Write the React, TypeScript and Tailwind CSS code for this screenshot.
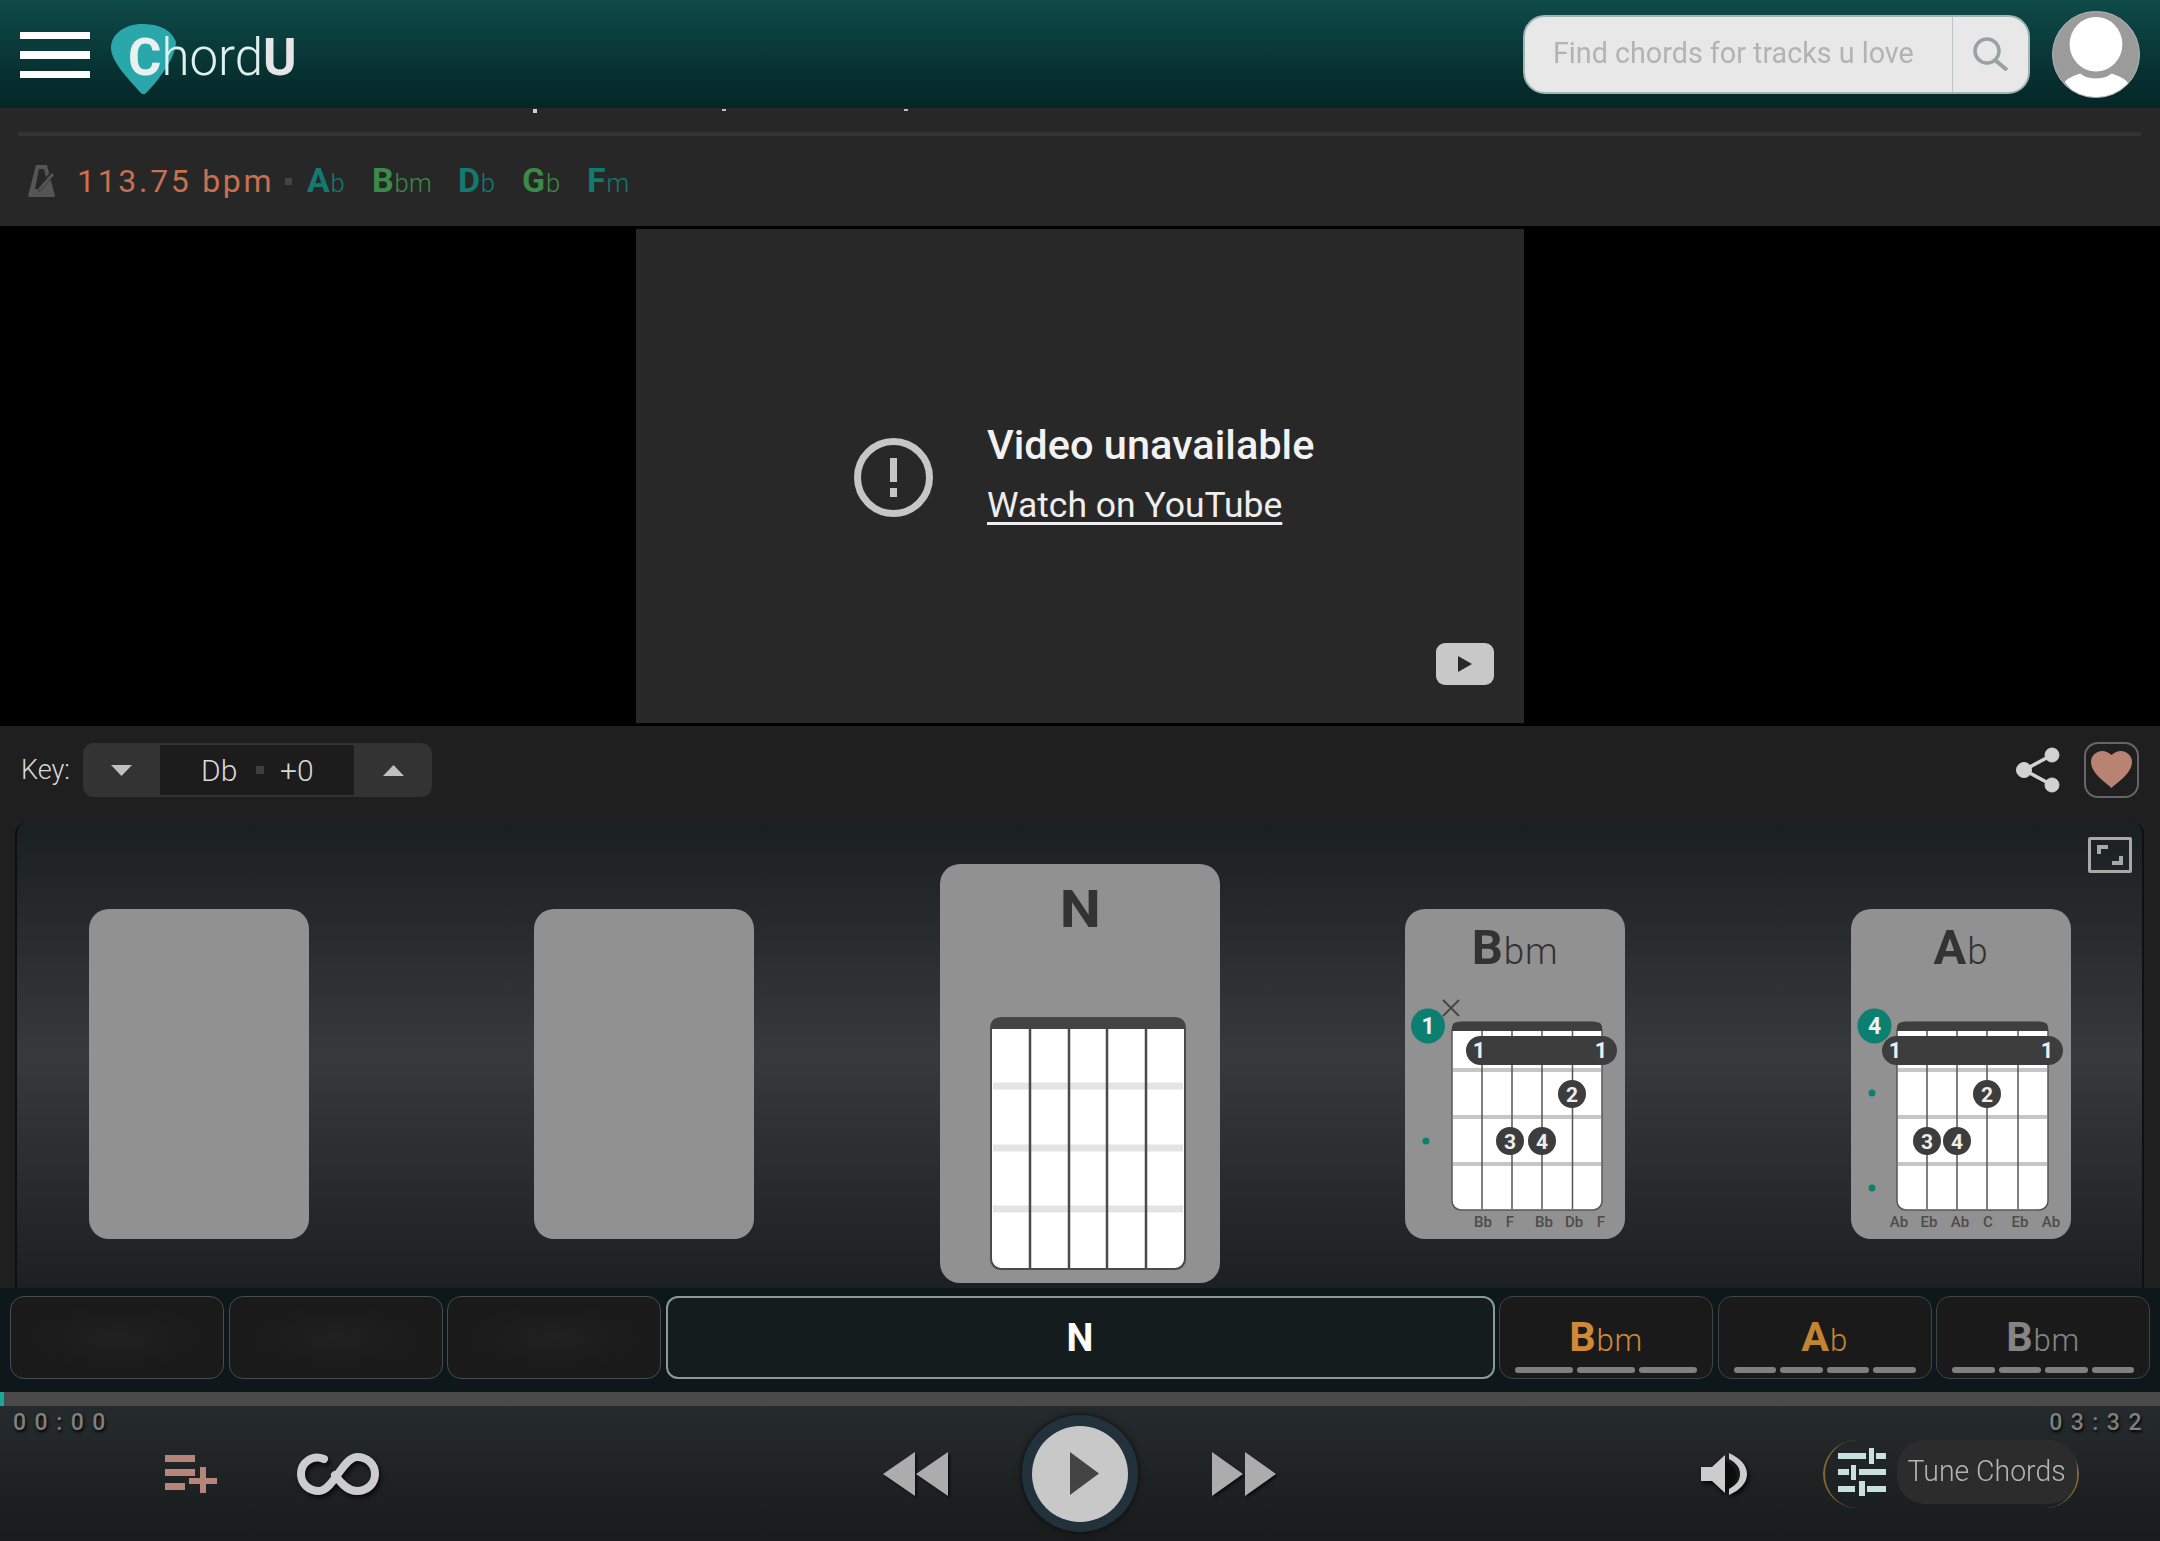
import React from "react";

const Root = ({ r, s, c }: { r: string; s: string; c?: string }) => (
  <span className={"whitespace-nowrap " + (c || "")}>
    <span className="font-bold text-[1.06em]">{r}</span>
    <span className="font-light text-[0.8em] ml-[0.03em] tracking-[0.02em]">{s}</span>
  </span>
);

const Hamburger = () => (
  <div className="ml-[20px] w-[70px] flex flex-col gap-[12px] mt-[2px]">
    <div className="h-[7px] bg-white" />
    <div className="h-[8px] bg-white" />
    <div className="h-[7px] bg-white" />
  </div>
);

const Logo = () => (
  <div className="ml-[21px] flex items-center h-[70px] mt-[10px]">
    <svg width="65" height="70" viewBox="0 0 65 70" className="shrink-0">
      <path d="M31 0C45 0 60 4 65 18C65 34 45 60 34 70H31C20 58 0 38 0 24C0 10 14 0 31 0Z" fill="#2aa7aa" />
    </svg>
    <div className="-ml-[48px] text-[51px] leading-none text-[#dff0f0] font-light whitespace-nowrap mt-[-4px]">
      <span className="font-bold text-[#e8f0f0]">C</span>hord<span className="font-bold text-[#e6e6e6]">U</span>
    </div>
  </div>
);

const SearchBox = () => (
  <div className="ml-auto w-[507px] h-[79px] rounded-[22px] bg-[#e8e8e8] border-[2px] border-[#a3b5b3] flex overflow-hidden">
    <div className="w-[427px] pl-[28px] flex items-center text-[29px] text-[#b3b3b3] whitespace-nowrap">
      <span className="origin-left scale-x-[0.99] inline-block">Find chords for tracks u love</span>
    </div>
    <div className="flex-1 border-l border-[#bcc8c6] flex items-center justify-center">
      <svg width="35" height="34" viewBox="0 0 35 34" fill="none" stroke="#98a2a2">
        <circle cx="14" cy="14" r="12" strokeWidth="3.5" />
        <path d="M22 23L34 33" strokeWidth="4" />
      </svg>
    </div>
  </div>
);

const Avatar = () => (
  <div className="ml-[22px] mr-[20px] w-[88px] h-[87px] rounded-full overflow-hidden bg-[#9b9b9b] border border-[#b5b5b5] shrink-0">
    <svg width="86" height="85" viewBox="0 0 88 87">
      <ellipse cx="44" cy="33" rx="27" ry="28" fill="#fff" />
      <path d="M12 72C14 68 22 65 28 63C33 67 38 68 44 68C50 68 55 67 60 63C66 65 74 68 78 74L60 90H28Z" fill="#fff" />
    </svg>
  </div>
);

const Metronome = () => (
  <svg width="28" height="34" viewBox="0 0 28 34" className="ml-[28px] shrink-0">
    <path d="M8 1H19L27 32Q27 33 25 33H2Q0 33 0 32Z" fill="#555" />
    <path d="M11 5H16L19 18L14 25H7Z" fill="#272727" />
    <path d="M10 26L26 8" stroke="#272727" strokeWidth="5" />
    <path d="M11 26L25 10" stroke="#555" strokeWidth="3" />
  </svg>
);

const ChordChip = ({ r, s, w, c }: { r: string; s: string; w: string; c: string }) => (
  <div className={w + " shrink-0 " + c}>
    <div className="inline-block text-[32px] leading-none">
      <Root r={r} s={s} />
    </div>
  </div>
);

const SubBar = () => (
  <div className="h-[118px] bg-[#272727] shrink-0">
    <div className="flex h-[5px] pt-[1px]">
      <div className="ml-[533px] w-[4px] h-[4px] bg-[#cfcfcf]" />
      <div className="ml-[185px] w-[4px] h-[2px] bg-[#bbb]" />
      <div className="ml-[178px] w-[4px] h-[2px] bg-[#bbb]" />
    </div>
    <div className="mt-[19px] ml-[18px] mr-[19px] h-[4px] bg-[#333333]" />
    <div className="h-[90px] flex items-center">
      <Metronome />
      <div className="ml-[21px] w-[208px] shrink-0 text-[32px] leading-none text-[#c96f52] tracking-[2.7px] whitespace-nowrap">113.75 bpm</div>
      <div className="w-[7px] h-[7px] bg-[#444] shrink-0" />
      <div className="ml-[15px] flex items-center">
        <ChordChip r="A" s="b" w="w-[65px]" c="text-[#127a70]" />
        <ChordChip r="B" s="bm" w="w-[86px]" c="text-[#3b8a47]" />
        <ChordChip r="D" s="b" w="w-[64px]" c="text-[#127a70]" />
        <ChordChip r="G" s="b" w="w-[65px]" c="text-[#3b8a47]" />
        <ChordChip r="F" s="m" w="w-[65px]" c="text-[#127a70]" />
      </div>
    </div>
  </div>
);

const Video = () => (
  <div className="h-[500px] bg-black flex justify-center shrink-0">
    <div className="relative mt-[3px] w-[888px] h-[494px] bg-[#282828] pl-[218px] pt-[191px] flex items-start">
      <svg width="79" height="79" viewBox="0 0 79 79" className="mt-[18px] shrink-0">
        <circle cx="39.5" cy="39.5" r="36" fill="none" stroke="#c6c6c6" strokeWidth="7" />
        <rect x="36" y="20" width="7" height="24" fill="#c6c6c6" />
        <rect x="36" y="50" width="7" height="9" fill="#c6c6c6" />
      </svg>
      <div className="ml-[54px] text-white whitespace-nowrap">
        <div className="h-[50px] flex items-center text-[41.5px] font-medium text-[#f2f2f2]">Video unavailable</div>
        <div className="mt-[14px] h-[44px] flex items-center text-[35.5px] text-[#eeeeee] underline underline-offset-[5px] decoration-[3px]">Watch on YouTube</div>
      </div>
      <div className="absolute right-[30px] bottom-[38px] w-[58px] h-[42px] rounded-[9px] bg-[#c8c8c8] flex items-center justify-center">
        <svg width="16" height="18" viewBox="0 0 16 18"><path d="M1 1L15 9L1 17Z" fill="#282828" /></svg>
      </div>
    </div>
  </div>
);

const KeyRow = () => (
  <div className="h-[97px] shrink-0 bg-[#1f1f1f] pt-[17px] flex items-start">
    <div className="ml-[21px] w-[62px] h-[54px] flex items-center text-[27px] font-light text-[#d8d8d8]">
      <span className="inline-block">Key:</span>
    </div>
    <div className="w-[349px] h-[54px] rounded-[11px] bg-[#333333] flex items-center">
      <div className="w-[77px] flex justify-center">
        <svg width="21" height="11" viewBox="0 0 21 11"><path d="M0 0H21L10.5 11Z" fill="#c0c0c0" /></svg>
      </div>
      <div className="w-[194px] h-[50px] bg-[#1c1c1c] flex items-center text-[30px] font-light text-[#d8d8d8]">
        <div className="ml-[41px] w-[55px]">Db</div>
        <div className="w-[8px] h-[8px] bg-[#3e3e3e]" />
        <div className="ml-[16px]">+0</div>
      </div>
      <div className="flex-1 flex justify-center">
        <svg width="21" height="11" viewBox="0 0 21 11"><path d="M0 11H21L10.5 0Z" fill="#c0c0c0" /></svg>
      </div>
    </div>
    <div className="ml-auto flex items-center h-[54px] mr-[21px]">
      <svg width="44" height="46" viewBox="0 0 44 46" fill="#d2d2d2" stroke="#d2d2d2">
        <path d="M36 8L8 23L36 38" fill="none" strokeWidth="3.5" />
        <circle cx="36" cy="8" r="7" />
        <circle cx="8" cy="23" r="7.5" />
        <circle cx="36" cy="38" r="7" />
      </svg>
      <div className="ml-[24px] w-[55px] h-[56px] rounded-[14px] border-[2px] border-[#666] flex items-center justify-center">
        <svg width="41" height="38" viewBox="0 0 41 38">
          <path d="M20.5 37C14 31 0 22 0 11C0 4 6 0 11 0C15 0 18 2 20.5 4C23 2 26 0 30 0C35 0 41 4 41 11C41 22 27 31 20.5 37Z" fill="#b88373" />
        </svg>
      </div>
    </div>
  </div>
);

type Dot = [number, number, string];

const Diagram = ({
  strings, barre, barreDigits, dots, badge, badgeX, x, marks, labels, left,
}: {
  strings: number[]; barre: [number, number]; barreDigits: [number, number]; dots: Dot[];
  badge: string; badgeX: number; x?: [number, number]; marks: [number, number][]; labels: [number, string][]; left: number;
}) => (
  <svg width="220" height="253" viewBox="0 77 220 253" fontFamily="Roboto, sans-serif" className="block">
    <rect x={left} y="113" width={197 - left} height="188" rx="9" fill="#fff" stroke="#555" strokeWidth="1.5" />
    <path d={`M${left} 122V119Q${left} 113 ${left + 6} 113H191Q197 113 197 119V122Z`} fill="#3e3e3e" />
    {[161, 208, 255].map((y) => (
      <rect key={y} x={left + 1} y={y - 2} width={195 - left} height="4" fill="#c6c6c6" />
    ))}
    {strings.map((sx) => (
      <line key={sx} x1={sx} x2={sx} y1="122" y2="300" stroke="#555" strokeWidth="1.5" />
    ))}
    <rect x={barre[0]} y="127" width={barre[1] - barre[0]} height="29" rx="14.5" fill="#3d3d3d" />
    {barreDigits.map((d, i) => (
      <text key={i} x={d} y="149" textAnchor="middle" fontSize="22" fontWeight="700" fill="#eee">1</text>
    ))}
    {dots.map(([cx, cy, t]) => (
      <g key={t}>
        <circle cx={cx} cy={cy} r="14" fill="#3d3d3d" />
        <text x={cx} y={cy + 7.5} textAnchor="middle" fontSize="21" fontWeight="700" fill="#eee">{t}</text>
      </g>
    ))}
    <ellipse cx={badgeX} cy="117" rx="17" ry="17.5" fill="#0b7f70" />
    <text x={badgeX} y="125" textAnchor="middle" fontSize="23" fontWeight="700" fill="#f2f2f2">{badge}</text>
    {x && (
      <path d={`M${x[0] - 8} ${x[1] - 8}L${x[0] + 8} ${x[1] + 8}M${x[0] + 8} ${x[1] - 8}L${x[0] - 8} ${x[1] + 8}`} stroke="#444" strokeWidth="1.8" />
    )}
    {marks.map(([mx, my]) => (
      <circle key={my} cx={mx} cy={my} r="3.5" fill="#0b7f70" />
    ))}
    {labels.map(([lx, t], i) => (
      <text key={i} x={lx} y="318" textAnchor="middle" fontSize="15" fontWeight="500" fill="#4c4c4c">{t}</text>
    ))}
  </svg>
);

const CardTitle = ({ r, s }: { r: string; s: string }) => (
  <div className="h-[77px] flex items-center justify-center text-[#333] text-[46px] leading-none pt-[1px]">
    <Root r={r} s={s} />
  </div>
);

const Blank = ({ cls }: { cls: string }) => <div className={cls + " w-[220px] h-[330px] mt-[86px] rounded-[20px] bg-[#919191] shrink-0"} />;

const Panel = () => (
  <div className="h-[465px] shrink-0 bg-[#1f1f1f] pl-[15px] pr-[16px]">
    <div className="h-full rounded-t-[10px] border-l-[2px] border-r-[2px] border-[#0f0f0f] bg-gradient-to-b from-[#1a1f21] via-[#373a3c] via-50% to-[#1c2022] flex items-start relative">
      <Blank cls="ml-[72px]" />
      <Blank cls="ml-[225px]" />
      <div className="ml-[186px] mt-[41px] w-[280px] h-[419px] rounded-[20px] bg-[#919191] shrink-0">
        <div className="h-[91px] flex items-center justify-center text-[52px] font-bold leading-none text-[#333]">
          <span className="scale-x-[1.12] inline-block">N</span>
        </div>
        <svg width="280" height="328" viewBox="0 91 280 328" className="block">
          <rect x="51" y="154" width="194" height="251" rx="10" fill="#fff" stroke="#4a4a4a" strokeWidth="2" />
          <path d="M51 165V162Q51 154 59 154H237Q245 154 245 162V165Z" fill="#444" />
          {[222, 284, 345].map((y) => (
            <rect key={y} x="53" y={y - 3.5} width="190" height="7" fill="#e4e4e4" />
          ))}
          {[90, 129, 167, 206].map((x) => (
            <line key={x} x1={x} x2={x} y1="165" y2="404" stroke="#4a4a4a" strokeWidth="2.5" />
          ))}
        </svg>
      </div>
      <div className="ml-[185px] mt-[86px] w-[220px] h-[330px] rounded-[20px] bg-[#919191] shrink-0">
        <CardTitle r="B" s="bm" />
        <Diagram
          left={47}
          strings={[77, 107, 137, 167.5]}
          barre={[61, 212]}
          barreDigits={[74, 196]}
          dots={[[167, 185, "2"], [105, 232, "3"], [137, 232, "4"]]}
          badge="1"
          badgeX={23}
          x={[46, 99]}
          marks={[[21, 232]]}
          labels={[[78, "Bb"], [105, "F"], [139, "Bb"], [169, "Db"], [196, "F"]]}
        />
      </div>
      <div className="ml-[226px] mt-[86px] w-[220px] h-[330px] rounded-[20px] bg-[#919191] shrink-0">
        <CardTitle r="A" s="b" />
        <Diagram
          left={46}
          strings={[76, 106, 136, 167]}
          barre={[31, 212]}
          barreDigits={[44, 196]}
          dots={[[136, 185, "2"], [76, 232, "3"], [106, 232, "4"]]}
          badge="4"
          badgeX={23.5}
          marks={[[21, 184], [21, 279]]}
          labels={[[48, "Ab"], [78, "Eb"], [109, "Ab"], [137, "C"], [169, "Eb"], [200, "Ab"]]}
        />
      </div>
      <div className="absolute right-[10px] top-[14px] w-[44px] h-[36px] border-[3px] border-[#a8a8a8] rounded-[2px]">
        <svg width="38" height="30" viewBox="0 0 38 30" className="block">
          <path d="M8 14V7H17M30 16V23H21" fill="none" stroke="#a8a8a8" strokeWidth="4" />
        </svg>
      </div>
    </div>
  </div>
);

const EmptyCell = () => (
  <div className="w-[214px] h-[83px] rounded-[14px] border-[1.5px] border-[#484c4c] bg-[radial-gradient(ellipse_at_center,#202020,#1a1a1a_60%)] shrink-0" />
);

const BarCell = ({ r, s, c, bars }: { r: string; s: string; c: string; bars: number }) => (
  <div className="w-[214px] h-[83px] rounded-[14px] border-[1.5px] border-[#3f4444] bg-[#1a1a1a] shrink-0 flex flex-col px-[15px] pb-[5px]">
    <div className={"flex-1 pt-[11px] flex items-center justify-center text-[39px] leading-none " + c}>
      <Root r={r} s={s} />
    </div>
    <div className="flex gap-[4px]">
      {Array.from({ length: bars }).map((_, i) => (
        <div key={i} className="flex-1 h-[6px] rounded-[3px] bg-[#808080]" />
      ))}
    </div>
  </div>
);

const Strip = () => (
  <div className="h-[104px] shrink-0 bg-[#0e1719] pt-[8px] pl-[10px] flex items-start gap-[4.5px]">
    <EmptyCell />
    <EmptyCell />
    <EmptyCell />
    <div className="w-[829px] h-[83px] rounded-[12px] border-[2px] border-[#8b9a99] bg-[#141c1d] shrink-0 flex items-center justify-center text-white text-[38px] font-bold leading-none">
      <span className="inline-block">N</span>
    </div>
    <BarCell r="B" s="bm" c="text-[#d08a35]" bars={3} />
    <BarCell r="A" s="b" c="text-[#c18433]" bars={4} />
    <BarCell r="B" s="bm" c="text-[#858585]" bars={4} />
  </div>
);

const Progress = () => (
  <div className="h-[14px] shrink-0 bg-[#4a4a4a]">
    <div className="h-full w-[4px] bg-[#1aa89a]" />
  </div>
);

const Controls = () => (
  <div className="flex items-center h-[117px] -mt-[21px]">
    <svg width="52" height="38" viewBox="0 0 52 38" className="ml-[165px] shrink-0" fill="#b5857a">
      <rect x="0" y="0" width="30" height="7" />
      <rect x="0" y="14" width="30" height="7" />
      <rect x="0" y="28" width="20" height="7" />
      <rect x="24" y="23" width="28" height="6" />
      <rect x="35" y="12" width="6" height="26" />
    </svg>
    <svg width="82" height="42" viewBox="0 0 82 42" fill="none" stroke="#cccccc" strokeWidth="8" strokeLinecap="round" className="ml-[80px] shrink-0 drop-shadow-[2px_3px_2px_rgba(0,0,0,0.7)]">
      <path d="M27 6C15 1 4 10 4 21C4 31 12 38 22 38C36 38 46 4 60 4C70 4 78 11 78 21C78 31 70 38 60 38C50 38 43 29 38 22" />
    </svg>
    <svg width="65" height="44" viewBox="0 0 65 44" fill="#acacac" className="ml-[504px] shrink-0 drop-shadow-[2px_2px_1px_rgba(0,0,0,0.6)]">
      <path d="M32 0V44L0 22Z" />
      <path d="M65 0V44L33 22Z" />
    </svg>
    <div className="ml-[74px] w-[116px] h-[117px] rounded-full bg-[#22323c] flex items-center justify-center shrink-0 shadow-[0_0_6px_rgba(0,0,0,0.7)]">
      <div className="w-[96px] h-[96px] rounded-full bg-[#c8c8c8] flex items-center justify-center">
        <svg width="29" height="43" viewBox="0 0 29 43" className="ml-[9px]"><path d="M0 0L29 21.5L0 43Z" fill="#444" /></svg>
      </div>
    </div>
    <svg width="64" height="44" viewBox="0 0 64 44" fill="#acacac" className="ml-[74px] shrink-0 drop-shadow-[2px_2px_1px_rgba(0,0,0,0.6)]">
      <path d="M0 0V44L31 22Z" />
      <path d="M33 0V44L64 22Z" />
    </svg>
    <svg width="46" height="44" viewBox="0 0 46 44" className="ml-[425px] shrink-0 drop-shadow-[2px_3px_2px_rgba(0,0,0,0.8)]">
      <path d="M0 15H11L24 3V41L11 29H0Z" fill="#cccccc" />
      <path d="M24 9C32 13 34 17 34 22C34 27 32 31 24 35Z" fill="#0c0c0c" />
      <path d="M28 1C39 6 46 13 46 22C46 31 39 38 28 43V37C35 33 39 29 39 22C39 15 35 11 28 7Z" fill="#cccccc" />
    </svg>
    <div className="ml-[76px] w-[256px] h-[68px] rounded-[34px] border-x-[2px] border-[#86662f] flex items-start shrink-0">
      <svg width="48" height="48" viewBox="0 0 48 48" fill="#c8e0de" className="ml-[13px] mt-[8px] shrink-0">
        <rect x="0" y="5" width="28" height="6" />
        <rect x="31" y="0" width="5" height="16" />
        <rect x="38" y="5" width="10" height="6" />
        <rect x="0" y="21" width="11" height="6" />
        <rect x="13" y="17" width="5" height="15" />
        <rect x="21" y="21" width="27" height="6" />
        <rect x="0" y="38" width="17" height="6" />
        <rect x="21" y="33" width="6" height="15" />
        <rect x="29" y="38" width="19" height="6" />
      </svg>
      <div className="ml-[11px] flex-1 h-[64px] rounded-[28px] bg-[#2c2c2c] flex items-center justify-center text-[29px] font-light text-[#b4b4b4]">
        <span className="scale-x-[0.98] inline-block whitespace-nowrap">Tune Chords</span>
      </div>
    </div>
  </div>
);

const Footer = () => (
  <div className="flex-1 bg-gradient-to-b from-[#252b2d] to-[#191b1c]">
    <div className="h-[30px] pt-[5px] pl-[13px] pr-[10px] flex justify-between text-[23px] leading-[24px] font-medium tracking-[8.5px] text-[#7f7f7f] [text-shadow:1px_2px_3px_#000]">
      <span>00:00</span>
      <span>03:32</span>
    </div>
    <Controls />
  </div>
);

export default function App() {
  return (
    <div className="w-full h-[1541px] overflow-hidden flex flex-col bg-[#1f1f1f] font-[Roboto,sans-serif]">
      <div className="h-[108px] shrink-0 bg-gradient-to-b from-[#0e4b49] to-[#052526] flex items-center">
        <Hamburger />
        <Logo />
        <SearchBox />
        <Avatar />
      </div>
      <SubBar />
      <Video />
      <KeyRow />
      <Panel />
      <Strip />
      <Progress />
      <Footer />
    </div>
  );
}
